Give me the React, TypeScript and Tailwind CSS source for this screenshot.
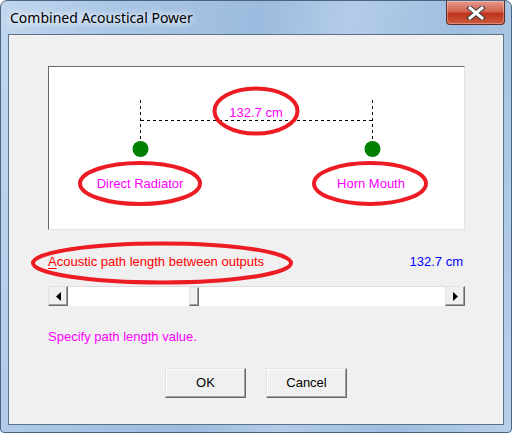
import React from "react";

const uiFont = { fontFamily: '"Liberation Sans", Arial, sans-serif' };

function TitleBar() {
  return (
    <div className="flex h-[33px] items-start">
      <span
        className="pl-[9px] pt-[7px] text-[14px] leading-[20px] text-black [text-shadow:0_0_6px_#fff,0_0_10px_#fff]"
        style={{ fontFamily: '"Noto Sans", "Open Sans", sans-serif' }}
      >
        Combined Acoustical Power
      </span>
      {/* close button */}
      <div className="ml-auto mr-[6px] flex h-[24px] w-[59px] items-center justify-center rounded-b-[4px] border border-t-0 border-[#5b2d2a] bg-[linear-gradient(180deg,#e49a8e_0%,#d4634f_45%,#bd3219_55%,#cf5a40_100%)] shadow-[inset_0_0_0_1px_rgba(255,255,255,0.3)]">
        <svg width="20" height="14" viewBox="0 0 20 14">
          <path d="M4 2 L16 12 M16 2 L4 12" stroke="#3a3a3a" strokeWidth="5" strokeLinecap="square" />
          <path d="M4 2 L16 12 M16 2 L4 12" stroke="#fff" strokeWidth="3" strokeLinecap="square" />
        </svg>
      </div>
    </div>
  );
}

function Diagram() {
  return (
    <div className="ml-[39px] mt-[31px] h-[164px] w-[417px] border border-[#6a6a6a] border-b-[#e3e3e3] border-r-[#e3e3e3] bg-white">
      <svg width="415" height="162" viewBox="0 0 415 162" className="block" style={uiFont}>
        <g stroke="#000" strokeWidth="1" strokeDasharray="3 3" shapeRendering="crispEdges">
          <line x1="91.5" y1="33" x2="91.5" y2="75" />
          <line x1="323.5" y1="33" x2="323.5" y2="75" />
          <line x1="92" y1="53.5" x2="324" y2="53.5" />
        </g>
        <circle cx="91.5" cy="82" r="8" fill="#008000" />
        <circle cx="323.5" cy="82" r="8" fill="#008000" />
        <ellipse cx="207" cy="44" rx="41.5" ry="22.5" fill="none" stroke="#ed1c24" strokeWidth="4" />
        <ellipse cx="91" cy="116.5" rx="60" ry="20.5" fill="none" stroke="#ed1c24" strokeWidth="4" />
        <ellipse cx="321" cy="116.5" rx="56" ry="20.5" fill="none" stroke="#ed1c24" strokeWidth="4" />
        <text x="207" y="47" fill="#ff00ff" fontSize="13" textAnchor="middle" dominantBaseline="middle">
          132.7 cm
        </text>
        <text x="91" y="118" fill="#ff00ff" fontSize="13" textAnchor="middle" dominantBaseline="middle">
          Direct Radiator
        </text>
        <text x="322" y="118" fill="#ff00ff" fontSize="13" textAnchor="middle" dominantBaseline="middle">
          Horn Mouth
        </text>
      </svg>
    </div>
  );
}

function ArrowButton({ dir }: { dir: "left" | "right" }) {
  return (
    <div className="flex h-full w-[20px] shrink-0 items-center justify-center border border-[#e3e3e3] border-b-[#696969] border-r-[#696969] bg-[#f0f0f0] shadow-[inset_-1px_-1px_#a0a0a0]">
      <svg width="5" height="9" viewBox="0 0 5 9">
        {dir === "left" ? <path d="M5 0 L0 4.5 L5 9 Z" fill="#000" /> : <path d="M0 0 L5 4.5 L0 9 Z" fill="#000" />}
      </svg>
    </div>
  );
}

function ScrollBar() {
  return (
    <div className="ml-[39px] mt-[17px] flex h-[20px] w-[417px]">
      <ArrowButton dir="left" />
      <div className="flex flex-1 border-t border-[#dcdcdc] bg-white">
        <div className="w-[121px]" />
        <div className="h-full w-[10px] border border-[#e3e3e3] border-b-[#696969] border-r-[#696969] bg-[#f0f0f0] shadow-[inset_-1px_-1px_#a0a0a0]" />
      </div>
      <ArrowButton dir="right" />
    </div>
  );
}

function Btn({ label }: { label: string }) {
  return (
    <button className="h-[30px] w-[81px] border border-[#e3e3e3] border-b-[#696969] border-r-[#696969] bg-[#f0f0f0] text-[13px] text-black shadow-[inset_-1px_-1px_#a0a0a0,inset_1px_1px_#fff]">
      {label}
    </button>
  );
}

export default function App() {
  return (
    <div className="relative h-[433px] w-[512px] overflow-hidden rounded-t-[7px] rounded-b-[4px] border border-[#4a6580] bg-[linear-gradient(100deg,#c2d7ee_0%,#a9c6e6_20%,#9dbbde_45%,#b3cce8_60%,#9ebddf_80%,#b8d0ea_100%)]">
      <TitleBar />
      <div
        className="ml-[7px] h-[391px] w-[496px] border border-[#5d7187] bg-[#f0f0f0]"
        style={uiFont}
      >
        <Diagram />
        <div className="ml-[39px] mt-[25px] flex w-[417px] items-center justify-between pr-[2px] text-[13px] leading-[14px]">
          <span className="text-[#ff0000]">
            <span className="underline underline-offset-2">A</span>coustic path length between outputs
          </span>
          <span className="text-[#0000ff]">132.7 cm</span>
        </div>
        <ScrollBar />
        <div className="ml-[39px] mt-[24px] text-[13px] leading-[14px] text-[#ff00ff]">Specify path length value.</div>
        <div className="mt-[24px] flex justify-center gap-[20px]">
          <Btn label="OK" />
          <Btn label="Cancel" />
        </div>
      </div>
      {/* annotation ellipse over the label */}
      <svg width="270" height="48" viewBox="0 0 270 48" className="absolute left-[28px] top-[238px]">
        <ellipse cx="133" cy="24" rx="129" ry="19.5" fill="none" stroke="#ed1c24" strokeWidth="4" />
      </svg>
    </div>
  );
}
